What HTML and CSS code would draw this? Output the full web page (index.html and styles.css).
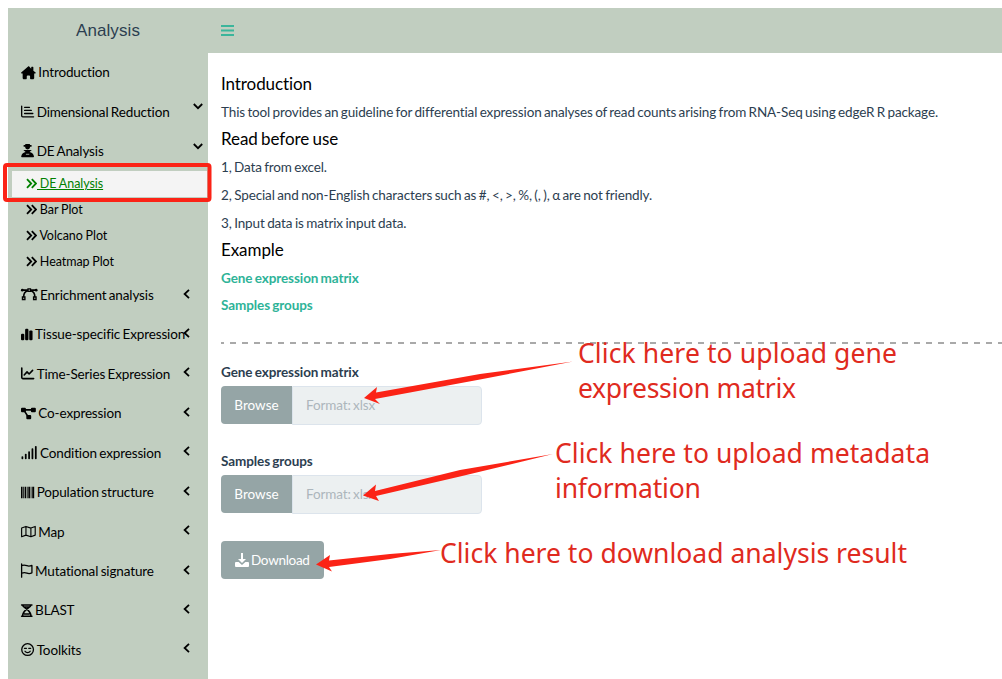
FILE: index.html
```html
<!DOCTYPE html>
<html lang="en">
<head>
<meta charset="utf-8">
<title>Analysis</title>
<link rel="stylesheet" href="styles.css">
</head>
<body>
<div class="app">
  <aside class="sidebar">
    <div class="brand">Analysis</div>
    <nav class="menu">
      <a class="item"><svg class="ico w576" viewBox="0 0 576 512"><path d="M288 10 8 256c-14 16-4 32 16 32h40v176c0 26 20 48 46 48h90c14 0 24-10 24-24v-88c0-18 14-32 32-32h64c18 0 32 14 32 32v88c0 14 10 24 24 24h90c26 0 46-22 46-48V288h40c22 0 30-18 14-32L480 180V56c0-14-8-24-22-24h-40c-12 0-22 10-22 24v50L310 10c-6-6-16-6-22 0z"/></svg>Introduction</a>
      <a class="item"><svg class="ico w512" viewBox="0 0 512 512"><path class="line" d="M26 40v380q0 40 40 40h424M140 90h190M140 210h260M140 330h320"/></svg>Dimensional Reduction<svg class="chev open" viewBox="0 0 10 7"><path d="M.8 1 5 5.2 9.2 1"/></svg></a>
      <a class="item"><svg class="ico w512" viewBox="0 0 512 512"><path d="M166 0h180v36h64v70h-64v50q-26 54-90 54t-90-54v-50h-64V36h64zM90 232h332l-90 80c80 16 150 70 172 160q6 40-28 40H36q-34 0-28-40c22-90 92-144 172-160z"/><path class="cut" d="M190 400h132"/></svg>DE Analysis<svg class="chev open" viewBox="0 0 10 7"><path d="M.8 1 5 5.2 9.2 1"/></svg></a>
      <div class="sub">
        <a class="subitem active"><svg class="dbl" viewBox="0 0 11 11"><path d="M1 1.2 5.2 5.5 1 9.8M5.8 1.2 10 5.5 5.8 9.8"/></svg><span>&nbsp;DE Analysis</span></a>
        <a class="subitem"><svg class="dbl" viewBox="0 0 11 11"><path d="M1 1.2 5.2 5.5 1 9.8M5.8 1.2 10 5.5 5.8 9.8"/></svg><span>&nbsp;Bar Plot</span></a>
        <a class="subitem"><svg class="dbl" viewBox="0 0 11 11"><path d="M1 1.2 5.2 5.5 1 9.8M5.8 1.2 10 5.5 5.8 9.8"/></svg><span>&nbsp;Volcano Plot</span></a>
        <a class="subitem"><svg class="dbl" viewBox="0 0 11 11"><path d="M1 1.2 5.2 5.5 1 9.8M5.8 1.2 10 5.5 5.8 9.8"/></svg><span>&nbsp;Heatmap Plot</span></a>
      </div>
      <a class="item"><svg class="ico w640" viewBox="0 0 640 512"><path d="M246 10h148v148H246zM30 324h148v148H30zM462 324h148v148H462z"/><circle cx="50" cy="84" r="52"/><circle cx="590" cy="84" r="52"/><path class="line bold" d="M50 84h206M384 84h206M256 110C160 140 105 220 104 334M384 110c96 30 151 110 152 224"/><path class="dot" d="M298 62h44v44h-44zM82 376h44v44H82zM514 376h44v44h-44z"/></svg>Enrichment analysis<svg class="chev" viewBox="0 0 7 10"><path d="M6 .8 1.6 5 6 9.2"/></svg></a>
      <a class="item"><svg class="ico w448" viewBox="0 0 448 512"><rect x="0" y="224" width="128" height="256" rx="42"/><rect x="160" y="32" width="128" height="448" rx="42"/><rect x="320" y="96" width="128" height="384" rx="42"/></svg>Tissue-specific Expression<svg class="chev" viewBox="0 0 7 10"><path d="M6 .8 1.6 5 6 9.2"/></svg></a>
      <a class="item"><svg class="ico w512" viewBox="0 0 512 512"><path class="line bold" d="M30 40v370q0 40 40 40h420M125 310l110-120 80 80L450 130"/></svg>Time-Series Expression<svg class="chev" viewBox="0 0 7 10"><path d="M6 .8 1.6 5 6 9.2"/></svg></a>
      <a class="item"><svg class="ico w576" viewBox="0 0 576 512"><rect x="0" y="32" width="190" height="170" rx="40"/><rect x="386" y="32" width="190" height="170" rx="40"/><rect x="206" y="310" width="190" height="170" rx="40"/><path class="line bold" d="M100 112h380M130 150l140 220"/></svg>Co-expression<svg class="chev" viewBox="0 0 7 10"><path d="M6 .8 1.6 5 6 9.2"/></svg></a>
      <a class="item"><svg class="ico w640" viewBox="0 0 640 512"><rect x="20" y="400" width="68" height="112" rx="30"/><rect x="150" y="300" width="68" height="212" rx="30"/><rect x="280" y="200" width="68" height="312" rx="30"/><rect x="410" y="90" width="68" height="422" rx="30"/><rect x="540" y="0" width="68" height="512" rx="30"/></svg>Condition expression<svg class="chev" viewBox="0 0 7 10"><path d="M6 .8 1.6 5 6 9.2"/></svg></a>
      <a class="item"><svg class="ico w512" viewBox="0 0 512 512"><path d="M0 32h60v448H0zM84 32h28v448H84zM140 32h64v448h-64zM232 32h24v448h-24zM284 32h64v448h-64zM376 32h28v448h-28zM436 32h76v448h-76z"/></svg>Population structure<svg class="chev" viewBox="0 0 7 10"><path d="M6 .8 1.6 5 6 9.2"/></svg></a>
      <a class="item"><svg class="ico w576" viewBox="0 0 576 512"><path class="line thin" d="M24 118 192 56l192 64 168-64v336l-168 64-192-64-168 64zM192 56v336M384 120v336"/></svg>Map<svg class="chev" viewBox="0 0 7 10"><path d="M6 .8 1.6 5 6 9.2"/></svg></a>
      <a class="item"><svg class="ico w448" viewBox="0 0 448 512"><path class="line" d="M24 0v512M24 62C110 20 170 40 230 66s120 20 194-12v290c-74 34-134 34-194 10s-120-34-206 6"/></svg>Mutational signature<svg class="chev" viewBox="0 0 7 10"><path d="M6 .8 1.6 5 6 9.2"/></svg></a>
      <a class="item"><svg class="ico w448" viewBox="0 0 448 512"><path class="line dna" d="M24 38h400M24 474h400M60 40c0 110 328 170 328 432M388 40C388 150 60 210 60 472M120 120h208M130 392h188"/></svg>BLAST<svg class="chev" viewBox="0 0 7 10"><path d="M6 .8 1.6 5 6 9.2"/></svg></a>
      <a class="item"><svg class="ico w512" viewBox="0 0 512 512"><circle class="line" cx="256" cy="256" r="228"/><path class="line" d="M155 320c44 72 158 72 202 0"/><path class="line" d="M135 206h76M301 206h76"/></svg>Toolkits<svg class="chev" viewBox="0 0 7 10"><path d="M6 .8 1.6 5 6 9.2"/></svg></a>
    </nav>
  </aside>
  <div class="page">
    <header class="topbar"><svg class="burger" viewBox="0 0 13 11"><path d="M0 1h13M0 5.5h13M0 10h13"/></svg></header>
    <main class="content">
      <h4>Introduction</h4>
      <p>This tool provides an guideline for differential expression analyses of read counts arising from RNA-Seq using edgeR R package.</p>
      <h4>Read before use</h4>
      <p>1, Data from excel.</p>
      <p class="chars">2, Special and non-English characters such as #, &lt;, &gt;, %, (, ), α are not friendly.</p>
      <p class="chars">3, Input data is matrix input data.</p>
      <h4>Example</h4>
      <a class="link">Gene expression matrix</a>
      <a class="link">Samples groups</a>
      <svg class="rule" width="781" height="2"><path d="M0 1h781"/></svg>
      <label class="label">Gene expression matrix</label>
      <div class="file"><span class="browse">Browse</span><span class="field">Format: xlsx</span></div>
      <label class="label">Samples groups</label>
      <div class="file"><span class="browse">Browse</span><span class="field">Format: xlsx</span></div>
      <button class="download"><svg class="dl" viewBox="0 0 14 14"><path d="M6 0h2v6h3L7 10 3 6h3z"/><path d="M1 9h2.6L7 12l3.4-3H13q1 0 1 1v3q0 1-1 1H1q-1 0-1-1v-3q0-1 1-1z"/></svg>Download</button>
    </main>
  </div>
</div>
<svg class="notes" width="1002" height="679" viewBox="0 0 1002 679">
  <rect class="frame" x="5" y="165" width="204.500" height="35" rx="2"/>
  <path d="M364 398 377 387 376 392.500 480 374 573 361.500 480 379.500 375 399 380 404z"/>
  <path d="M363 495.500 376 484.500 375 491 460 470 553 454 460 476.500 376 496 379 501z"/>
  <path d="M316 564.500 330 555 329 560.500 390 554 441 550 390 559 329 567 332 571.500z"/>
  <text x="578" y="363" textLength="319">Click here to upload gene</text>
  <text x="578" y="398" textLength="218">expression matrix</text>
  <text x="555" y="463" textLength="375">Click here to upload metadata</text>
  <text x="555" y="498" textLength="146">information</text>
  <text x="440" y="563" textLength="467">Click here to download analysis result</text>
</svg>
</body>
</html>
```
FILE: styles.css
```css
* { box-sizing: border-box; }
body {
  margin: 0;
  padding: 8px 0 0 8px;
  height: 679px;
  overflow: hidden;
  background: #fff;
  color: #2c3e50;
  font: 13.5px/20px Lato, sans-serif;
  letter-spacing: -.13px;
  word-spacing: -.9px;
}
.app { display: flex; height: 671px; }
.sidebar { width: 200px; flex: none; background: #c1cec0; color: #000; }
.brand { height: 44.400px; line-height: 45px; text-align: center; color: #2c3e50; font-family: "Liberation Sans", Arial, sans-serif; font-size: 17px; letter-spacing: .1px; }
.menu { letter-spacing: -.14px; }
.item { position: relative; display: flex; align-items: center; height: 39.450px; padding: 0 5px 0 13px; white-space: nowrap; }
.ico { height: 13.200px; margin-right: 2.500px; flex: none; overflow: visible; }
.w640 { width: 16.500px; }
.w576 { width: 14.850px; }
.w512 { width: 13.200px; }
.w448 { width: 11.550px; }
.line { fill: none; stroke: #000; stroke-width: 50; stroke-linecap: round; stroke-linejoin: round; }
.bold { stroke-width: 62; }
.thin { stroke-width: 44; }
.dna { stroke-width: 60; }
.cut { fill: none; stroke: #c1cec0; stroke-width: 30; }
.dot { fill: #c1cec0; }
.chev { position: absolute; right: 18.300px; top: 13.300px; width: 7px; height: 10px; fill: none; stroke: #000; stroke-width: 1.8; }
.chev.open { right: 5px; top: 11.500px; width: 10px; height: 7px; }
.sub { padding: 0 1px 0 4px; margin-bottom: .5px; font-size: 12.500px; letter-spacing: -.06px; word-spacing: -.3px; }
.subitem { display: flex; align-items: center; height: 26px; padding-left: 14px; }
.subitem span { padding-top: 1px; }
.dbl { width: 11px; height: 11px; fill: none; stroke: currentColor; stroke-width: 1.8; }
.active { background: #f4f4f4; color: #008000; }
.active span { text-decoration: underline; }
.page { flex: 1; min-width: 0; }
.topbar { height: 45px; padding: 17px 13px; background: #c1cec0; }
.burger { display: block; width: 13px; height: 11px; stroke: #3bb59b; stroke-width: 2.2; }
.content { display: flex; flex-direction: column; align-items: flex-start; padding: 20px 0 0 13px; }
h4 { margin: 0 0 8px; font-size: 17px; font-weight: 400; line-height: 21px; letter-spacing: -.08px; color: #000; }
p { margin: 0 0 8px; white-space: nowrap; }
.chars { letter-spacing: -.12px; word-spacing: -.85px; }
p + h4 { margin-top: -2px; margin-bottom: 8px; }
p:nth-of-type(1) + h4 { margin-top: -2.500px; }
.link { color: #2eb398; font-weight: 700; letter-spacing: -.09px; margin-bottom: 7px; }
.rule { display: block; margin: 20px 0 18px; fill: none; stroke: #a9a9a9; stroke-width: 2; stroke-dasharray: 6 6; stroke-dashoffset: 3; }
.label { font-weight: 700; letter-spacing: -.09px; margin-bottom: 4px; }
.file { display: flex; height: 39px; width: 261px; margin-bottom: 26px; line-height: 37px; }
.browse { width: 71px; height: 38px; margin-top: .5px; padding-top: 1px; text-align: center; color: #fff; background: #95a5a6; border-radius: 4px 0 0 4px; letter-spacing: 0; }
.field { flex: 1; padding-left: 13px; color: #acb6bc; background: #ecf0f1; border: 1px solid #dce4ec; border-radius: 0 4px 4px 0; }
.download { display: flex; align-items: center; gap: 2px; width: 103px; height: 38px; margin-top: 1px; padding: 0 14px; border: 0; border-radius: 4px; background: #95a5a6; color: #fff; font: inherit; letter-spacing: -.3px; }
.dl { width: 14px; height: 14px; fill: #fff; flex: none; }
.notes { position: absolute; left: 0; top: 0; fill: #fb2316; font: 26.500px "Noto Sans", sans-serif; letter-spacing: 0; word-spacing: 0; }
.notes text { fill: #df2a20; }
.frame { fill: none; stroke: #fb2316; stroke-width: 4; }
```
